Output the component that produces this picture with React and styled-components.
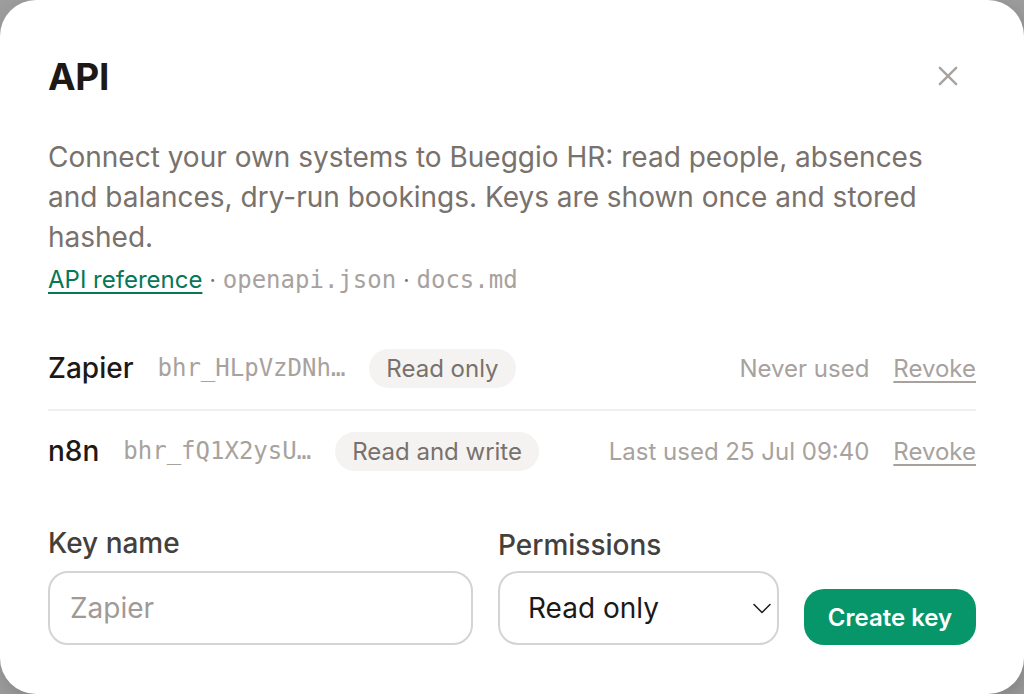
import React from "react";
import styled, { createGlobalStyle } from "styled-components";

const GlobalStyle = createGlobalStyle`
  html, body {
    margin: 0;
    padding: 0;
    background: #9e9e9e;
  }
  body {
    font-family: Inter, "Noto Sans", sans-serif;
    -webkit-font-smoothing: antialiased;
  }
`;

const keys = [
  { name: "Zapier", prefix: "bhr_HLpVzDNh…", perm: "Read only", used: "Never used" },
  { name: "n8n", prefix: "bhr_fQ1X2ysU…", perm: "Read and write", used: "Last used 25 Jul 09:40" },
];

const App = () => {
  return (
    <>
      <GlobalStyle />
      <Modal>
        <Header>
          <Title>API</Title>
          <CloseButton aria-label="Close">
            <svg width="28" height="28" viewBox="0 0 24 24" fill="none" stroke="currentColor" strokeWidth="2" strokeLinecap="round">
              <path d="M5 5l14 14M19 5L5 19" />
            </svg>
          </CloseButton>
        </Header>
        <Description>
          Connect your own systems to Bueggio HR: read people, absences and balances, dry-run bookings. Keys are shown once and stored hashed.
        </Description>
        <Links>
          <DocLink href="#">API reference</DocLink>
          <Dot>·</Dot>
          <Mono>openapi.json</Mono>
          <Dot>·</Dot>
          <Mono>docs.md</Mono>
        </Links>
        <KeyList>
          {keys.map((k) => (
            <KeyRow key={k.name}>
              <KeyName>{k.name}</KeyName>
              <KeyPrefix>{k.prefix}</KeyPrefix>
              <Badge>{k.perm}</Badge>
              <LastUsed>{k.used}</LastUsed>
              <Revoke href="#">Revoke</Revoke>
            </KeyRow>
          ))}
        </KeyList>
        <Form>
          <Field $grow>
            <Label>Key name</Label>
            <TextInput placeholder="Zapier" />
          </Field>
          <Field $width="281px">
            <Label $lower>Permissions</Label>
            <SelectWrap>
              <Select defaultValue="read">
                <option value="read">Read only</option>
                <option value="write">Read and write</option>
              </Select>
              <Chevron width="24" height="24" viewBox="0 0 24 24" fill="none" stroke="currentColor" strokeWidth="1.5" strokeLinecap="round" strokeLinejoin="round">
                <path d="M4 8.5l8 8 8-8" />
              </Chevron>
            </SelectWrap>
          </Field>
          <CreateButton>Create key</CreateButton>
        </Form>
      </Modal>
    </>
  );
};

const Modal = styled.div`
  box-sizing: border-box;
  width: 1024px;
  height: 694px;
  background: #fff;
  border-radius: 36px;
  padding: 54px 48px 48px;
  display: flex;
  flex-direction: column;
  box-shadow: 4px 8px 24px rgba(0, 0, 0, 0.18);
`;

const Header = styled.div`
  display: flex;
  align-items: center;
  justify-content: space-between;
  height: 44px;
`;

const Title = styled.h1`
  margin: 0;
  font-size: 37px;
  font-weight: 700;
  color: #1c1917;
  letter-spacing: -0.3px;
`;

const CloseButton = styled.button`
  border: none;
  background: none;
  padding: 0;
  margin-right: 14px;
  color: #a8a29e;
  display: flex;
  cursor: pointer;
`;

const Description = styled.p`
  margin: 39px 0 0;
  font-size: 28px;
  line-height: 40px;
  color: #78716c;
`;

const Links = styled.div`
  display: flex;
  align-items: baseline;
  gap: 7px;
  margin-top: 7px;
  height: 32px;
  line-height: 32px;
`;

const DocLink = styled.a`
  font-size: 24px;
  color: #047857;
  text-decoration: underline;
  text-underline-offset: 4px;
  text-decoration-thickness: 2px;
`;

const Dot = styled.span`
  font-size: 22px;
  color: #78716c;
`;

const Mono = styled.span`
  font-family: "DejaVu Sans Mono", "Liberation Mono", monospace;
  font-size: 24px;
  color: #a8a29e;
`;

const KeyList = styled.div`
  margin-top: 31px;
  display: flex;
  flex-direction: column;
`;

const KeyRow = styled.div`
  display: flex;
  align-items: center;
  gap: 24px;
  height: 82px;
  & + & {
    border-top: 2px solid #f1efed;
    height: 80px;
  }
`;

const KeyName = styled.span`
  font-size: 28px;
  font-weight: 500;
  color: #1c1917;
`;

const KeyPrefix = styled.span`
  font-family: "DejaVu Sans Mono", "Liberation Mono", monospace;
  font-size: 24px;
  color: #a8a29e;
`;

const Badge = styled.span`
  background: #f4f3f1;
  color: #78716c;
  font-size: 24px;
  line-height: 39px;
  padding: 0 17px;
  border-radius: 20px;
`;

const LastUsed = styled.span`
  margin-left: auto;
  font-size: 24px;
  color: #a8a29e;
`;

const Revoke = styled.a`
  font-size: 24px;
  color: #a8a29e;
  text-decoration: underline;
  text-underline-offset: 4px;
  text-decoration-thickness: 2px;
`;

const Form = styled.div`
  margin-top: 36px;
  display: flex;
  align-items: flex-end;
  gap: 25px;
`;

const Field = styled.div`
  display: flex;
  flex-direction: column;
  gap: 12px;
  flex: ${(p) => (p.$grow ? "1" : "none")};
  width: ${(p) => p.$width || "auto"};
`;

const Label = styled.label`
  font-size: 28px;
  line-height: 32px;
  font-weight: 500;
  color: #44403c;
  position: relative;
  top: ${(p) => (p.$lower ? "2px" : "0")};
`;

const TextInput = styled.input`
  box-sizing: border-box;
  height: 74px;
  width: 100%;
  border: 2px solid #d6d3d1;
  border-radius: 20px;
  padding: 0 20px;
  font-family: Inter, sans-serif;
  font-size: 28px;
  color: #1c1917;
  outline: none;
  &::placeholder {
    color: #a09a96;
  }
`;

const SelectWrap = styled.div`
  position: relative;
  display: flex;
`;

const Select = styled.select`
  box-sizing: border-box;
  appearance: none;
  height: 74px;
  width: 100%;
  border: 2px solid #d6d3d1;
  border-radius: 20px;
  padding: 0 28px;
  font-family: Inter, sans-serif;
  font-size: 28px;
  color: #1c1917;
  background: #fff;
  outline: none;
`;

const Chevron = styled.svg`
  position: absolute;
  right: 5px;
  top: 25px;
  color: #1c1917;
  pointer-events: none;
`;

const CreateButton = styled.button`
  height: 56px;
  width: 172px;
  border: none;
  border-radius: 20px;
  background: #07966a;
  color: #fff;
  font-family: Inter, sans-serif;
  font-size: 24px;
  font-weight: 600;
  cursor: pointer;
`;

export default App;
